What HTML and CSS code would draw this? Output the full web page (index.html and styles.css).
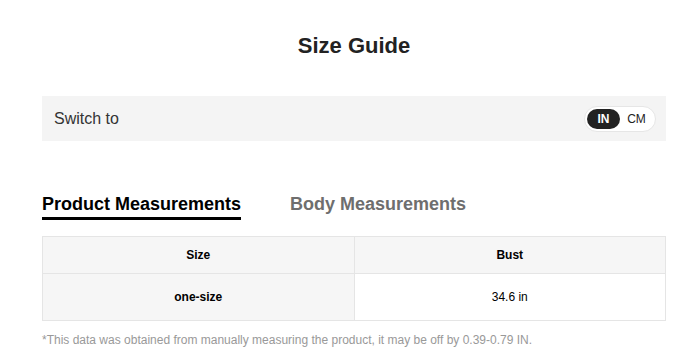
FILE: index.html
```html
<!DOCTYPE html>
<html>
<head>
<meta charset="utf-8">
<link rel="stylesheet" href="styles.css">
</head>
<body>
<div class="guide">
  <h1 class="title">Size Guide</h1>
  <div class="switch-bar">
    <span class="switch-label">Switch to</span>
    <div class="toggle">
      <span class="opt active">IN</span>
      <span class="opt">CM</span>
    </div>
  </div>
  <div class="tabs">
    <span class="tab active">Product Measurements</span>
    <span class="tab">Body Measurements</span>
  </div>
  <table class="size-table">
    <tr class="head">
      <th>Size</th>
      <th>Bust</th>
    </tr>
    <tr>
      <td class="size-cell">one-size</td>
      <td>34.6 in</td>
    </tr>
  </table>
  <p class="note">*This data was obtained from manually measuring the product, it may be off by 0.39-0.79 IN.</p>
</div>
</body>
</html>
```
FILE: styles.css
```css
html, body {
  margin: 0;
  padding: 0;
  background: #fff;
}
body {
  font-family: "Liberation Sans", Arial, sans-serif;
  color: #222;
}
.guide {
  width: 624px;
  margin-left: 42px;
  padding-top: 33px;
}
.title {
  margin: 0;
  font-size: 22px;
  line-height: 26px;
  font-weight: bold;
  text-align: center;
  color: #222;
}
.switch-bar {
  margin-top: 37px;
  height: 45px;
  background: #f4f4f4;
  display: flex;
  align-items: center;
  justify-content: space-between;
  padding: 0 10px 0 12px;
}
.switch-label {
  font-size: 16px;
  color: #333;
}
.toggle {
  display: flex;
  align-items: center;
  background: #fff;
  border: 1px solid #e6e6e6;
  border-radius: 14px;
  padding: 2px;
}
.opt {
  width: 33px;
  height: 20px;
  line-height: 20px;
  text-align: center;
  font-size: 12px;
  color: #222;
  border-radius: 10px;
}
.opt.active {
  background: #222;
  color: #fff;
  font-weight: bold;
}
.tabs {
  margin-top: 53px;
  display: flex;
  gap: 49px;
}
.tab {
  font-size: 18px;
  font-weight: bold;
  color: #6e6e6e;
  line-height: 21px;
  padding-bottom: 2px;
  border-bottom: 3px solid transparent;
}
.tab.active {
  color: #000;
  border-bottom-color: #000;
}
.size-table {
  margin-top: 16px;
  width: 100%;
  border-collapse: collapse;
  font-size: 12px;
  color: #000;
}
.size-table th, .size-table td {
  border: 1px solid #e5e5e5;
  text-align: center;
  width: 50%;
  padding: 0;
  line-height: 14px;
}
.size-table th {
  background: #f6f6f6;
  height: 36px;
  font-weight: bold;
}
.size-table td {
  height: 46px;
  background: #fff;
}
.size-table td.size-cell {
  background: #f6f6f6;
  font-weight: bold;
}
.note {
  margin: 12px 0 0;
  font-size: 12px;
  color: #999;
}
```
